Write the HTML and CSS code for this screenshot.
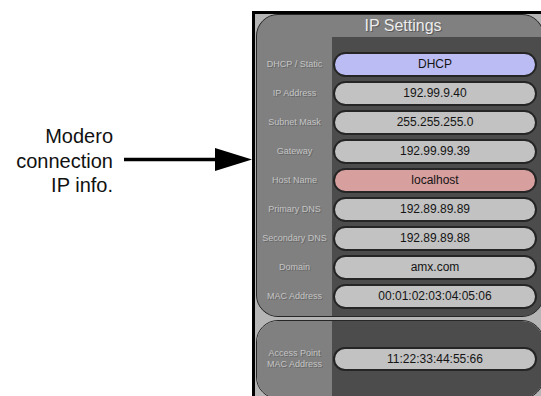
FILE: index.html
```html
<!DOCTYPE html>
<html>
<head>
    <meta charset="UTF-8">
    <link rel="stylesheet" href="styles.css">
</head>
<body>
    <div id="page">
        <div id="callout">
            <div class="callout-text">Modero<br>connection<br>IP info.</div>
            <svg class="arrow" width="128" height="23" viewBox="0 0 128 23">
                <line x1="0" y1="11.5" x2="96" y2="11.5" stroke="#000" stroke-width="3.5"/>
                <polygon points="91,0 128,11.5 91,23" fill="#000"/>
            </svg>
        </div>

        <div id="device">
            <div class="panel panel-main">
                <div class="panel-title">IP Settings</div>
                <div class="panel-body">
                    <div class="label">DHCP / Static</div>
                    <div class="value"><span class="pill pill-blue">DHCP</span></div>
                    <div class="label">IP Address</div>
                    <div class="value"><span class="pill">192.99.9.40</span></div>
                    <div class="label">Subnet Mask</div>
                    <div class="value"><span class="pill">255.255.255.0</span></div>
                    <div class="label">Gateway</div>
                    <div class="value"><span class="pill">192.99.99.39</span></div>
                    <div class="label">Host Name</div>
                    <div class="value"><span class="pill pill-red">localhost</span></div>
                    <div class="label">Primary DNS</div>
                    <div class="value"><span class="pill">192.89.89.89</span></div>
                    <div class="label">Secondary DNS</div>
                    <div class="value"><span class="pill">192.89.89.88</span></div>
                    <div class="label">Domain</div>
                    <div class="value"><span class="pill">amx.com</span></div>
                    <div class="label">MAC Address</div>
                    <div class="value"><span class="pill">00:01:02:03:04:05:06</span></div>
                </div>
            </div>

            <div class="panel panel-ap">
                <div class="panel-body">
                    <div class="label">Access Point<br>MAC Address</div>
                    <div class="value"><span class="pill">11:22:33:44:55:66</span></div>
                </div>
            </div>
        </div>
    </div>
</body>
</html>
```

FILE: styles.css
```css
body {
    margin: 0;
    background: #fff;
    overflow: hidden;
    font-family: "Liberation Sans", Arial, sans-serif;
}
#page {
    display: flex;
    width: 541px;
    height: 396px;
    overflow: hidden;
}
#callout {
    width: 252px;
    flex-shrink: 0;
    display: flex;
    align-items: flex-start;
    padding-top: 124px;
    box-sizing: border-box;
}
.callout-text {
    width: 113px;
    text-align: right;
    font-size: 20px;
    line-height: 24.5px;
    color: #111;
}
.arrow {
    margin-left: 11px;
    margin-top: 24px;
    flex-shrink: 0;
}
#device {
    flex: 1;
    margin-top: 11px;
    border-top: 3px solid #000;
    border-left: 3px solid #000;
    background: #b5b5b5;
    padding-left: 1px;
    min-width: 0;
}
.panel {
    margin-right: -3px;
    border: 1px solid #262626;
    border-radius: 22px;
    overflow: hidden;
    background: #4c4c4c;
}
.panel-main {
    height: 301px;
}
.panel-title {
    height: 22px;
    background: #808080;
    color: #ececec;
    font-size: 16px;
    line-height: 22px;
    text-align: center;
    padding-left: 6px;
    text-shadow: 1px 1px 0 #5a5a5a;
}
.panel-body {
    display: grid;
    grid-template-columns: 75px 1fr;
    grid-auto-rows: 25px;
    row-gap: 4px;
    padding-top: 15px;
    height: 100%;
    box-sizing: border-box;
    background: linear-gradient(to right, #808080 75px, #4c4c4c 75px);
}
.label {
    display: flex;
    align-items: center;
    justify-content: center;
    text-align: center;
    font-size: 9px;
    line-height: 11px;
    color: #c4c4c4;
    text-shadow: 1px 1px 0 #666;
    white-space: nowrap;
}
.value {
    padding: 0 6px 0 1px;
}
.pill {
    display: block;
    height: 25px;
    box-sizing: border-box;
    border: 2px solid #252525;
    border-radius: 13px;
    background: #c2c2c2;
    color: #141414;
    font-size: 12px;
    line-height: 21px;
    text-align: center;
}
.pill-blue {
    background: #bbbcf3;
}
.pill-red {
    background: #d89f9f;
}
.panel-ap {
    margin-top: 3px;
    height: 77px;
}
.panel-ap .panel-body {
    padding-top: 26px;
    grid-auto-rows: 24px;
}
.panel-ap .pill {
    height: 24px;
    line-height: 20px;
}
```
